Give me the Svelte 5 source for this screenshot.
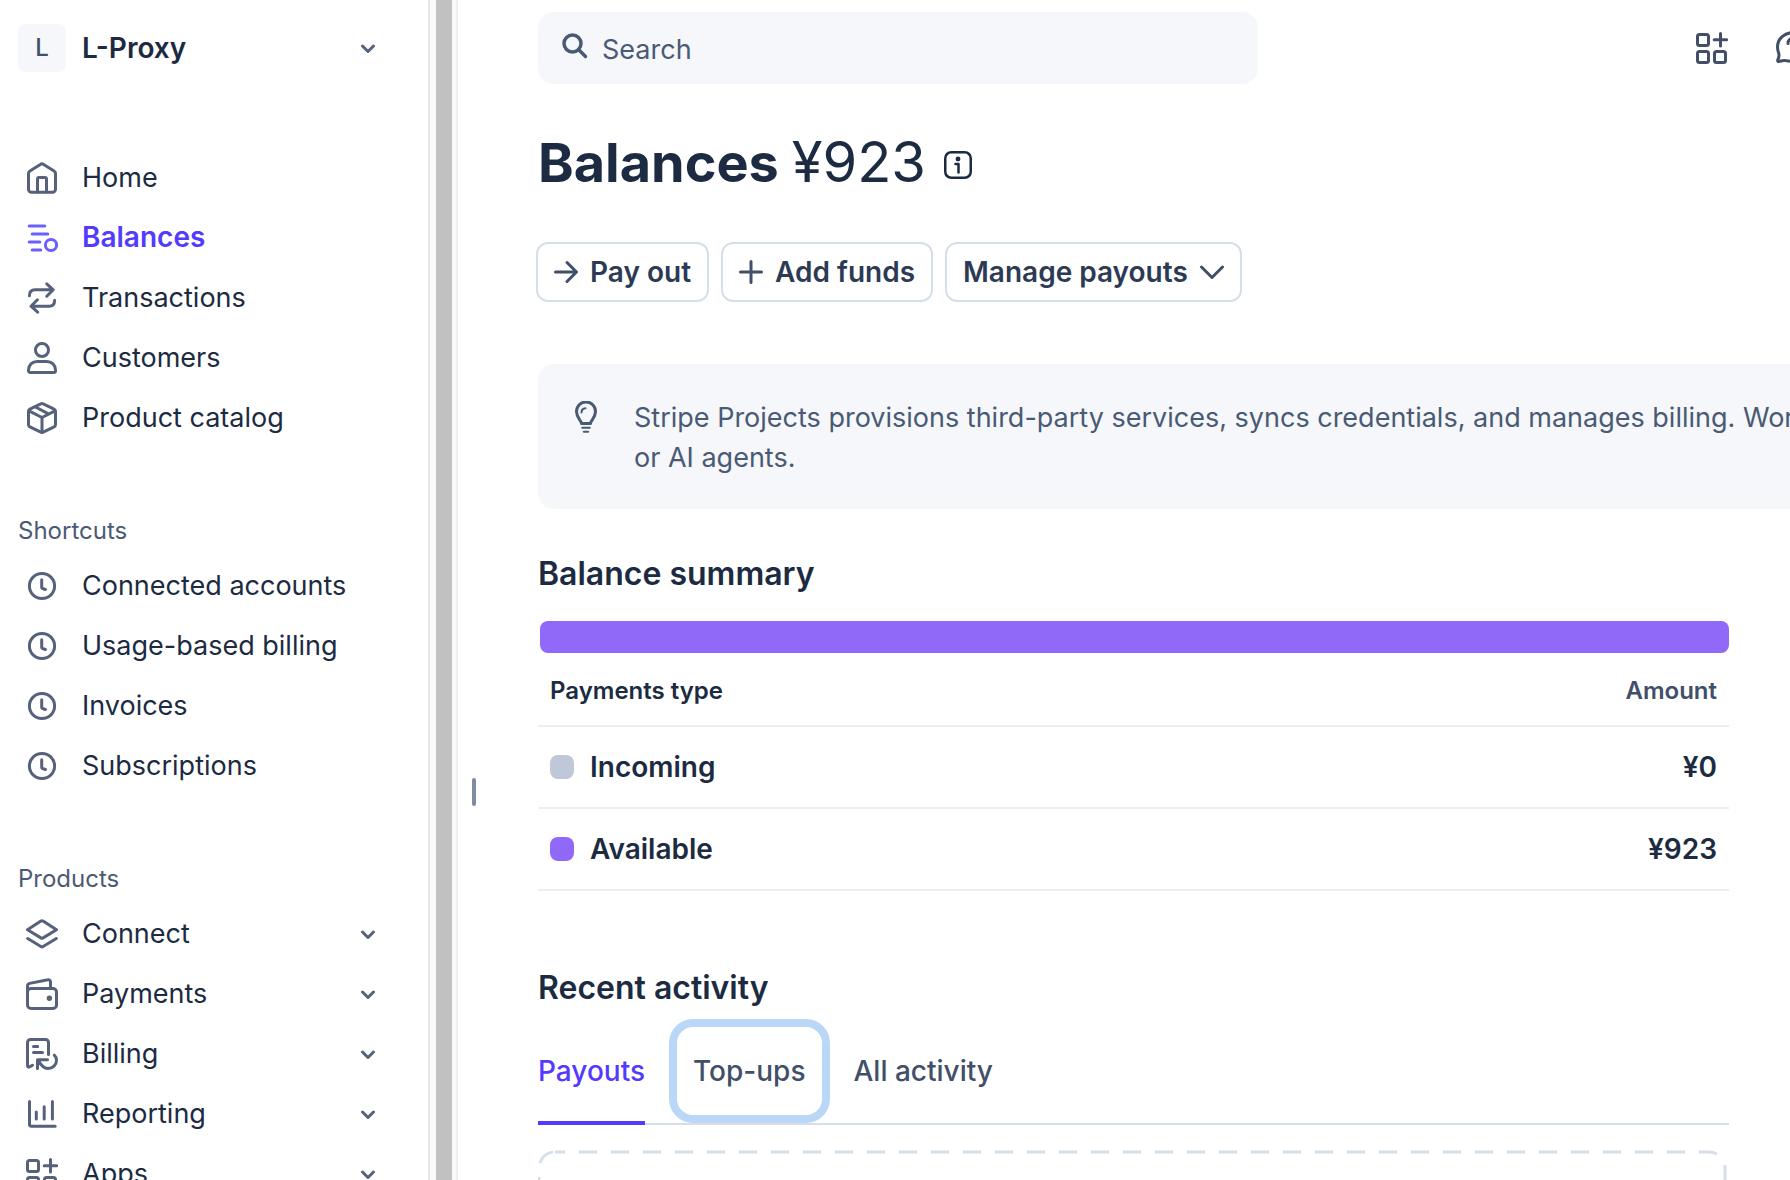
<script>
  const mainNav = [
    { label: 'Home', icon: 'home' },
    { label: 'Balances', icon: 'balances', active: true },
    { label: 'Transactions', icon: 'transactions' },
    { label: 'Customers', icon: 'customers' },
    { label: 'Product catalog', icon: 'product' },
  ];
  const shortcuts = ['Connected accounts', 'Usage-based billing', 'Invoices', 'Subscriptions'];
  const products = [
    { label: 'Connect', icon: 'connect' },
    { label: 'Payments', icon: 'payments' },
    { label: 'Billing', icon: 'billing' },
    { label: 'Reporting', icon: 'reporting' },
    { label: 'Apps', icon: 'apps' },
  ];
  const balances = [
    { type: 'Incoming', amount: '¥0', kind: 'incoming' },
    { type: 'Available', amount: '¥923', kind: 'available' },
  ];
  const tabs = ['Payouts', 'Top-ups', 'All activity'];

  let search = $state('');
  let activeTab = $state('Payouts');
  let focusedTab = $state('Top-ups');
</script>

{#snippet icon(name)}
  <svg class="icon" viewBox="0 0 32 32" aria-hidden="true">
    {#if name === 'home'}
      <path d="M2.5 11.6c0-1 .5-2 1.4-2.5L14.3 2.4c1-.7 2.4-.7 3.4 0l10.4 6.7c.9.5 1.4 1.5 1.4 2.5v15.7a3 3 0 0 1-3 3h-21a3 3 0 0 1-3-3z" />
      <path d="M11.5 30V17a1.5 1.5 0 0 1 1.5-1.5h6a1.5 1.5 0 0 1 1.5 1.5v13" />
    {:else if name === 'balances'}
      <path d="M3.2 4h15.6M6.2 12h15.6M3.2 20h10.6M6.2 28h8.6" />
      <circle cx="25" cy="23" r="5.6" />
    {:else if name === 'transactions'}
      <path d="M3.4 13.8c0-4 2.2-6 5.6-6h18M20.8 1.8l6.4 6-6.4 6.4M28.6 18.2c0 4-2.2 6-5.6 6H5M11.4 17.8 5 24.2l6.6 6" />
    {:else if name === 'customers'}
      <circle cx="16" cy="8" r="6.5" />
      <path d="M2.5 28c0-5 3.8-8.5 8.7-8.5h9.6c4.9 0 8.7 3.5 8.7 8.5v.8a1.7 1.7 0 0 1-1.7 1.7H4.2a1.7 1.7 0 0 1-1.7-1.7z" />
    {:else if name === 'product'}
      <path d="M14.8 1.9a2.6 2.6 0 0 1 2.4 0l10.9 5.3c.9.4 1.4 1.3 1.4 2.2v13.2c0 .9-.5 1.8-1.4 2.2L17.2 30.2a2.6 2.6 0 0 1-2.4 0L3.9 24.8a2.5 2.5 0 0 1-1.4-2.2V9.4c0-.9.5-1.8 1.4-2.2z" />
      <path d="M3 8.8l13 6.7 13-6.7M16 15.5V30M9.5 5l13 6.8" />
    {:else if name === 'clock'}
      <circle cx="16" cy="16" r="12.6" />
      <path d="M15.7 9.8v7.4c0 .6.3 1.1.9 1.3l2.8 1" />
    {:else if name === 'connect'}
      <path d="M14.9 3.1c.7-.4 1.5-.4 2.2 0L30.5 11.8 17.1 19.9c-.7.4-1.5.4-2.2 0L1.5 11.8z" />
      <path d="M1.7 20.5l13.2 8c.7.5 1.5.5 2.2 0l13.2-8" />
    {:else if name === 'payments'}
      <rect x="1.5" y="10.5" width="29" height="20" rx="3.5" />
      <path d="M1.5 14V8c0-1.3.9-2.3 2.2-2.6l18.2-3.6c1.3-.3 2.6.7 2.6 2v6.5" />
      <circle cx="23.4" cy="20.3" r="1.2" />
    {:else if name === 'billing'}
      <path d="M6.5 27.2l-3 1.7c-1 .5-2-.1-2-1.1V4.5a3 3 0 0 1 3-3h15a3 3 0 0 1 3 3v12" />
      <path d="M7.5 8.5h4.2M7.5 14.5h9M28.3 17.2c1.4 1.3 2.2 3.1 2.2 5 0 4.7-3.8 8.3-8.4 8.3-4.1 0-7.3-3.3-9.8-8.2M11.5 30.5V21.8h10" />
    {:else if name === 'reporting'}
      <path d="M3.5 3.5v22.8a2 2 0 0 0 2 2h23.7M10.3 14v7M18.2 8.8V21M26.4 3.5V21" />
    {:else if name === 'apps'}
      <rect x="1.5" y="2.5" width="11" height="11" rx="2" />
      <rect x="1.5" y="19.5" width="11" height="11" rx="2" />
      <rect x="18.5" y="19.5" width="11" height="11" rx="2" />
      <path d="M24.5 1.5v12.6M18.2 7.8h12.6" />
    {:else if name === 'bulb'}
      <path d="M11.5 22.5c0-3-5-5.5-5-12a9.5 9.5 0 0 1 19 0c0 6.5-5 9-5 12z" />
      <path class="thin" d="M11.5 11.5c0-2.5 1.5-4 4-4.2M12.2 26.7h7.6M13.8 30.7h4.4" />
    {/if}
  </svg>
{/snippet}

{#snippet chevron()}
  <svg class="chevron" viewBox="0 0 16 10" aria-hidden="true"><path d="M2.5 2 8 7.5 13.5 2" /></svg>
{/snippet}

<div class="page">
  <aside>
    <button class="account">
      <span class="avatar">L</span>
      <span class="name">L-Proxy</span>
      {@render chevron()}
    </button>

    <nav>
      <div class="group">
        {#each mainNav as item}
          <a href="#{item.icon}" class:active={item.active}>
            {@render icon(item.icon)}
            <span>{item.label}</span>
          </a>
        {/each}
      </div>
      <div class="group">
        <h2>Shortcuts</h2>
        {#each shortcuts as label}
          <a href="#shortcut">
            {@render icon('clock')}
            <span>{label}</span>
          </a>
        {/each}
      </div>
      <div class="group">
        <h2>Products</h2>
        {#each products as item}
          <button>
            {@render icon(item.icon)}
            <span>{item.label}</span>
            {@render chevron()}
          </button>
        {/each}
      </div>
    </nav>
  </aside>

  <div class="scrollbar"><div class="thumb"></div></div>

  <main>
    <div class="handle"></div>

    <header>
      <label class="search">
        <svg viewBox="0 0 26 26" aria-hidden="true"><circle cx="10.5" cy="10.5" r="8.5" /><path d="M17 17l6.5 6.5" /></svg>
        <input type="text" bind:value={search} placeholder="Search" aria-label="Search" />
      </label>
      <div class="tools">
        <button aria-label="Apps">{@render icon('apps')}</button>
        <button aria-label="Help">
          <svg class="help" viewBox="0 0 36 36" aria-hidden="true">
            <path d="M18 2.5C8.5 2.5 1.5 8.5 1.5 17c0 3 .8 5 1.3 6.600.7 2.500-.2 4.500-1 6.200-.5 1.200.2 1.900 1.300 1.600 2.600-.7 4.400-1.300 6.900-.8 2.500.6 5 .9 8 .9 9.500 0 16.500-6 16.500-14.500S27.500 2.500 18 2.500z" />
            <path d="M12 13.5c0-3.5 2.5-5.5 6-5.5s6 2 6 5-6 4-6 7" />
          </svg>
        </button>
      </div>
    </header>

    <div class="title">
      <h1>Balances <span>¥923</span></h1>
      <button aria-label="About balances">
        <svg viewBox="0 0 28 28" aria-hidden="true">
          <rect x="1.25" y="1.25" width="25.5" height="25.5" rx="6" />
          <path d="M11.5 13h3v8.5" />
          <circle cx="14" cy="8" r="1.2" />
        </svg>
      </button>
    </div>

    <div class="actions">
      <button>
        <svg viewBox="0 0 24 24" aria-hidden="true"><path d="M1.5 12h21M13 2.5l9.5 9.5-9.5 9.5" /></svg>
        Pay out
      </button>
      <button>
        <svg viewBox="0 0 24 24" aria-hidden="true"><path d="M12 1.5v21M1.5 12h21" /></svg>
        Add funds
      </button>
      <button>
        Manage payouts
        <svg viewBox="0 0 24 24" aria-hidden="true"><path d="M1.5 7 12 17.5 22.5 7" /></svg>
      </button>
    </div>

    <section class="banner">
      {@render icon('bulb')}
      <p>Stripe Projects provisions third-party services, syncs credentials, and manages billing. Work<br />or AI agents.</p>
    </section>

    <section class="summary">
      <h2>Balance summary</h2>
      <div class="bar"></div>
      <table>
        <thead>
          <tr><th>Payments type</th><th>Amount</th></tr>
        </thead>
        <tbody>
          {#each balances as row}
            <tr>
              <td><i class={row.kind}></i>{row.type}</td>
              <td>{row.amount}</td>
            </tr>
          {/each}
        </tbody>
      </table>
    </section>

    <section class="activity">
      <h2>Recent activity</h2>
      <div class="tabs" role="tablist">
        {#each tabs as tab}
          <button
            role="tab"
            aria-selected={activeTab === tab}
            class:selected={activeTab === tab}
            class:focused={focusedTab === tab}
            onclick={() => { activeTab = tab; focusedTab = ''; }}
          >{tab}</button>
        {/each}
      </div>
      <svg class="empty" aria-hidden="true"><rect x="1" y="2" height="258" rx="16" /></svg>
    </section>
  </main>
</div>

<style>
:global(body) {
  background: #fff;
}
.page {
  display: flex;
  height: 100vh;
  overflow: hidden;
  font-family: Inter, 'Liberation Sans', sans-serif;
  font-size: 27px;
  color: #1c2b42;
}
button {
  border: 0;
  padding: 0;
  background: none;
  font: inherit;
  color: inherit;
  text-align: left;
}
h1, h2, p {
  margin: 0;
}
svg {
  flex: none;
  fill: none;
  stroke: currentColor;
  stroke-width: 3;
  stroke-linecap: round;
  stroke-linejoin: round;
}
.icon {
  width: 32px;
  height: 32px;
}

/* sidebar */
aside {
  flex: none;
  box-sizing: border-box;
  width: 428px;
  padding: 18px 52px 0 18px;
  overflow: hidden;
}
.account {
  display: flex;
  align-items: center;
  gap: 16px;
  width: 100%;
  height: 60px;
}
.avatar {
  width: 48px;
  border-radius: 8px;
  background: #f5f7fb;
  color: #414f69;
  font-size: 24px;
  font-weight: 500;
  line-height: 48px;
  text-align: center;
}
.name {
  flex: 1;
  font-size: 28px;
  font-weight: 600;
}
.chevron {
  width: 16px;
  height: 10px;
  margin-top: 2px;
  color: #56627b;
}
nav {
  display: flex;
  flex-direction: column;
  gap: 64px;
  margin-top: 70px;
}
.group {
  display: flex;
  flex-direction: column;
}
.group h2 {
  padding-bottom: 6px;
  font-size: 24px;
  font-weight: 400;
  line-height: 38px;
  color: #4a5a74;
}
.group a, .group button {
  display: flex;
  align-items: center;
  gap: 24px;
  height: 60px;
  padding-left: 8px;
  color: inherit;
  text-decoration: none;
}
.group span {
  flex: 1;
  padding-bottom: 2px;
}
.group .icon {
  color: #56627b;
}
.group .active {
  color: #533afd;
  font-size: 28px;
  font-weight: 600;
}
.group .active .icon {
  color: #6a60ff;
}
.scrollbar {
  flex: none;
  padding: 0 4px 0 6px;
  background: #fafafa;
  border: solid #e6e6e6;
  border-width: 0 2px;
  border-right-color: #ebeff3;
}
.thumb {
  width: 16px;
  height: 100%;
  background: #c1c1c1;
}

/* content */
main {
  position: relative;
  flex: 1;
  min-width: 0;
  padding: 12px 61px 0 80px;
}
.handle {
  position: absolute;
  left: 14px;
  top: 778px;
  width: 4px;
  height: 28px;
  border-radius: 2px;
  background: #818ba6;
}
header {
  display: flex;
  justify-content: space-between;
}
.search {
  display: flex;
  align-items: center;
  gap: 14px;
  box-sizing: border-box;
  width: 720px;
  height: 72px;
  padding: 0 24px;
  border-radius: 16px;
  background: #f5f7fb;
  color: #4a5a74;
}
.search svg {
  width: 26px;
  height: 26px;
  margin-bottom: 4px;
}
.search circle, .search path {
  stroke-width: 3.5;
}
.search input {
  flex: 1;
  border: 0;
  padding: 2px 0 0;
  outline: 0;
  background: none;
  font: inherit;
  color: inherit;
}
.search input::placeholder {
  color: #4a5a74;
  opacity: 1;
}
.tools {
  display: flex;
  align-items: center;
  gap: 48px;
  margin-right: -83px;
  color: #414f69;
}
.tools button {
  display: flex;
}
.help {
  width: 36px;
  height: 36px;
}
.title {
  display: flex;
  align-items: center;
  gap: 18px;
  height: 72px;
  margin-top: 42px;
}
h1 {
  font-size: 54px;
  font-weight: 700;
  line-height: 72px;
}
h1 span {
  font-size: 56px;
  font-weight: 400;
}
.title button {
  display: flex;
  padding-top: 6px;
}
.title svg {
  width: 28px;
  height: 28px;
  stroke-width: 2.5;
}
.actions {
  display: flex;
  gap: 12px;
  margin: 44px 0 0 -2px;
}
.actions button {
  display: flex;
  align-items: center;
  gap: 12px;
  box-sizing: border-box;
  height: 60px;
  padding: 0 16px;
  border: 2px solid #d6dfe9;
  border-radius: 12px;
  color: #2c3a54;
  font-size: 28px;
  font-weight: 600;
}
.actions svg {
  width: 24px;
  height: 24px;
  color: #414f69;
}
.banner {
  display: flex;
  gap: 32px;
  width: 1400px;
  box-sizing: border-box;
  margin-top: 62px;
  padding: 34px 32px 31px;
  border-radius: 16px;
  background: #f5f7fb;
  color: #4a5a74;
}
.banner .icon {
  margin-top: 3px;
}
.banner p {
  line-height: 40px;
  white-space: nowrap;
}
.banner .thin {
  stroke-width: 2;
}
.summary h2, .activity h2 {
  font-size: 32px;
  font-weight: 600;
  line-height: 40px;
}
.summary {
  margin-top: 45px;
}
.bar {
  height: 32px;
  margin: 27px 0 0 2px;
  border-radius: 8px;
  background: #9069f8;
}
table {
  width: 100%;
  border-collapse: collapse;
}
th, td {
  padding: 0 12px;
  border-bottom: 2px solid #ebeff3;
  text-align: left;
  font-weight: 600;
}
th {
  height: 70px;
  padding-top: 2px;
  font-size: 24px;
}
td {
  height: 80px;
  font-size: 28px;
}
th:last-child, td:last-child {
  text-align: right;
}
th:last-child {
  color: #414f69;
}
td i {
  display: inline-block;
  width: 24px;
  height: 24px;
  margin-right: 16px;
  border-radius: 8px;
  vertical-align: -2px;
}
.incoming {
  background: #bfc8d8;
}
.available {
  background: #9069f8;
}
.activity {
  margin-top: 77px;
}
.tabs {
  display: flex;
  gap: 16px;
  margin-top: 19px;
  border-bottom: 2px solid #d6dfe9;
}
.tabs button {
  height: 88px;
  margin-bottom: 8px;
  padding: 0 16px;
  border-radius: 16px;
  color: #414f69;
  font-size: 28px;
  font-weight: 500;
}
.tabs button.selected {
  height: 98px;
  margin: 0 16px -2px 0;
  padding: 0 0 6px;
  border-bottom: 4px solid #533afd;
  border-radius: 0;
  color: #533afd;
}
.tabs .focused {
  box-shadow: 0 0 0 8px #bad7f7;
}
.empty {
  display: block;
  width: 100%;
  height: 262px;
  margin-top: 25px;
  stroke: #d6dfe9;
  stroke-linecap: butt;
}
.empty rect {
  width: calc(100% - 5px);
  stroke-dasharray: 18 14;
  stroke-dashoffset: 8;
}
</style>
